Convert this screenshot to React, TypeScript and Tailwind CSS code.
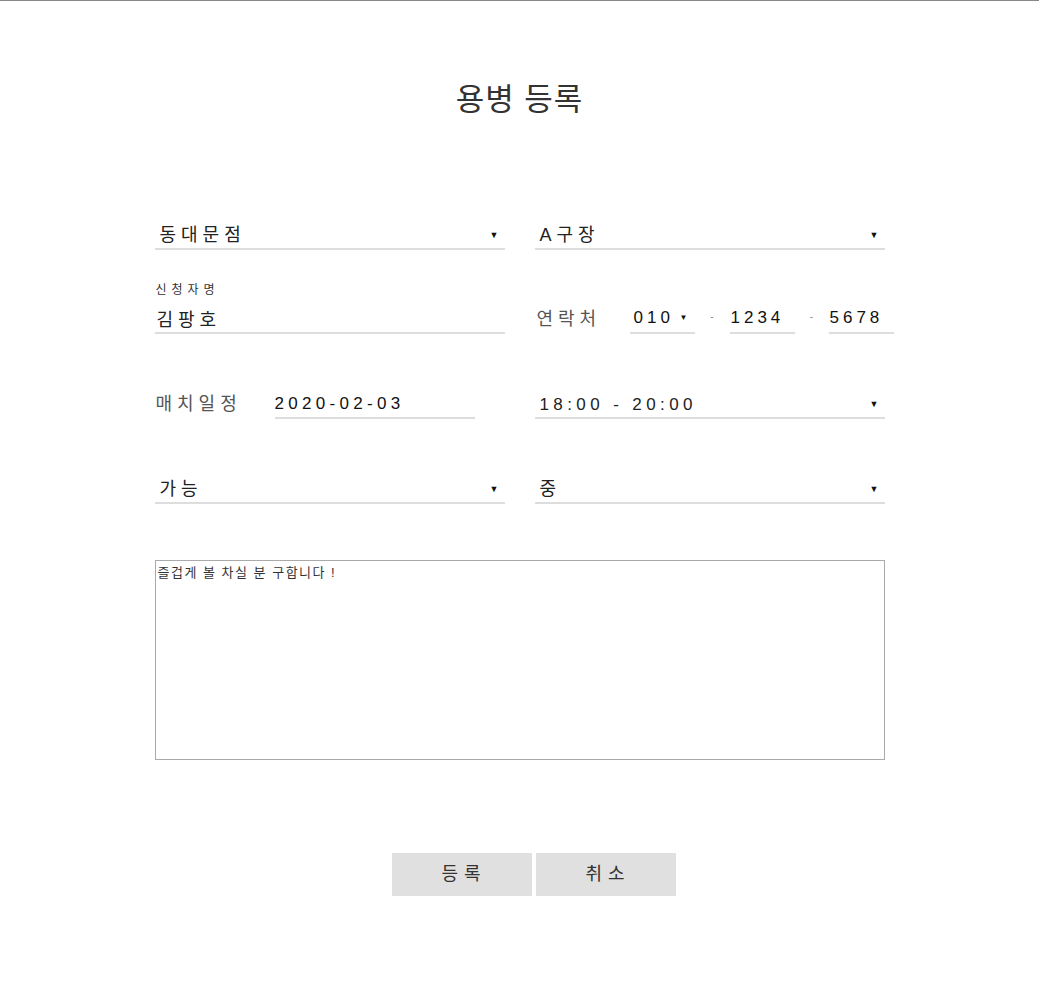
import { ReactNode } from 'react'

function Underlined({ className, children }: { className: string; children: ReactNode }) {
  return (
    <div className={`flex h-[30px] items-center border-b-2 border-[#dddddd] ${className}`}>
      {children}
    </div>
  )
}

function FakeSelect({ value, korean = true }: { value: string; korean?: boolean }) {
  return (
    <Underlined className="w-full justify-between pt-[3px] pl-[5px] pr-[6px]">
      <span className={`${korean ? 'text-[18px] tracking-[5px]' : 'text-[17px] tracking-[4.4px]'} text-[#222]`}>
        {value}
      </span>
      <span className="text-[9px] text-[#111]">▼</span>
    </Underlined>
  )
}

function Dash({ className }: { className: string }) {
  return (
    <span className={`flex h-[30px] items-center justify-center pb-[6px] text-[10px] text-[#888] ${className}`}>
      -
    </span>
  )
}

export default function App() {
  return (
    <div className="min-h-[996px] border-t border-[#888] bg-white font-['Liberation_Sans','Noto_Sans_CJK_KR',sans-serif]">
      <div className="mx-auto w-[730px] pt-[76px]">
        <h1 className="text-center text-[31px] leading-[45px] font-normal tracking-[1px] text-[#333]">용병 등록</h1>

        {/* store / court */}
        <div className="mt-[98px] grid grid-cols-2 gap-[30px]">
          <FakeSelect value="동대문점" />
          <FakeSelect value="A구장" />
        </div>

        {/* applicant / contact */}
        <div className="grid h-[84px] grid-cols-2 items-end gap-[30px]">
          <div>
            <label className="block pl-px text-[12px] leading-[14px] tracking-[5px] text-[#333]">신청자명</label>
            <Underlined className="mt-[7px] w-full pl-[2px] pt-[5px]">
              <input
                defaultValue="김팡호"
                className="w-full bg-transparent text-[18px] tracking-[5px] text-[#222] outline-none"
              />
            </Underlined>
          </div>
          <div className="flex items-end">
            <span className="flex h-[30px] w-[95px] shrink-0 items-center pl-[2px] text-[18px] tracking-[5px] text-[#555]">
              연락처
            </span>
            <Underlined className="w-[65px] shrink-0 justify-between pl-[4px] pr-[7px]">
              <span className="text-[17px] tracking-[4px] text-[#111]">010</span>
              <span className="text-[8px] text-[#111]">▼</span>
            </Underlined>
            <Dash className="w-[35px] shrink-0" />
            <Underlined className="w-[65px] shrink-0 pl-px">
              <input defaultValue="1234" className="w-full bg-transparent text-[17px] tracking-[4px] text-[#111] outline-none" />
            </Underlined>
            <Dash className="w-[34px] shrink-0" />
            <Underlined className="w-[65px] shrink-0 pl-px">
              <input defaultValue="5678" className="w-full bg-transparent text-[17px] tracking-[4px] text-[#111] outline-none" />
            </Underlined>
          </div>
        </div>

        {/* match schedule */}
        <div className="grid h-[85px] grid-cols-2 items-end gap-[30px]">
          <div className="flex items-end">
            <span className="flex h-[30px] w-[120px] shrink-0 items-center pl-px text-[18px] tracking-[5px] text-[#555]">
              매치일정
            </span>
            <Underlined className="w-[200px] pt-[2px]">
              <input
                defaultValue="2020-02-03"
                className="w-full bg-transparent text-[17px] tracking-[4.3px] text-[#111] outline-none"
              />
            </Underlined>
          </div>
          <FakeSelect value="18:00 - 20:00" korean={false} />
        </div>

        {/* availability / level */}
        <div className="grid h-[85px] grid-cols-2 items-end gap-[30px]">
          <FakeSelect value="가능" />
          <FakeSelect value="중" />
        </div>

        <textarea
          defaultValue="즐겁게 볼 차실 분 구합니다 !"
          className="mt-[56px] block h-[200px] w-full resize-none border border-[#aaa] px-[2px] py-[3px] text-[13px] leading-[18px] tracking-[1.5px] text-[#333] outline-none"
        />

        <div className="mt-[93px] flex justify-center gap-[4px] pl-[29px]">
          <button className="h-[43px] w-[140px] bg-[#e0e0e0] pl-[4px] text-[18px] tracking-[6px] text-[#333]">등록</button>
          <button className="h-[43px] w-[140px] bg-[#e0e0e0] pl-[4px] text-[18px] tracking-[6px] text-[#333]">취소</button>
        </div>
      </div>
    </div>
  )
}
